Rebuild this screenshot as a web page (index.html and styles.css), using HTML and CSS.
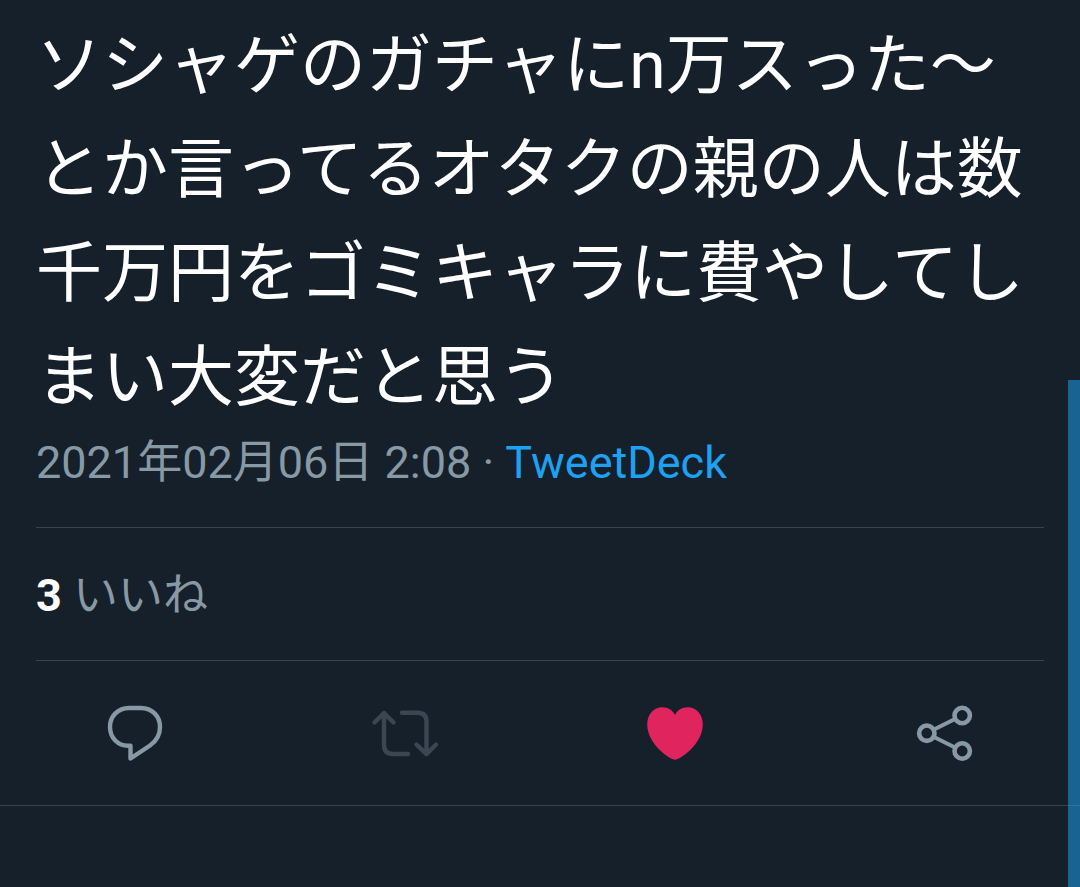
FILE: index.html
```html
<!DOCTYPE html>
<html lang="ja">
<head>
<meta charset="utf-8">
<meta name="viewport" content="width=device-width, initial-scale=1">
<title>ツイート</title>
<link rel="stylesheet" href="styles.css">
</head>
<body>
<main class="tweet">
  <article class="content">
    <p class="text">ソシャゲのガチャにn万スった〜とか言ってるオタクの親の人は数千万円をゴミキャラに費やしてしまい大変だと思う</p>
    <p class="meta"><time datetime="2021-02-06T02:08">2021年02月06日 2:08</time> · <a class="source" href="#">TweetDeck</a></p>
    <p class="stats"><strong class="count">3</strong> いいね</p>
  </article>
  <div class="actions">
    <button class="action" type="button" aria-label="返信">
      <svg class="icon" viewBox="0 0 90 90"><path stroke-width="4.400" d="M40.500 55.700H38C28 55.700 20 48 20 37C20 26 28 18 39 18H51C62 18 70 26 70 37C70 44.500 66.500 51 60 55.500L40.500 68.500Z"/></svg>
    </button>
    <button class="action faded" type="button" aria-label="リツイート" disabled>
      <svg class="icon" viewBox="0 0 90 90"><path stroke-width="4.400" d="M14.500 32.500L24 23L33.500 32.500M24 23V55Q24 64 33 64H48M42 22.800H57.500Q66.500 22.800 66.500 31.800V64M56.500 54.500L66.500 64.200L76 54.500"/></svg>
    </button>
    <button class="action liked" type="button" aria-label="いいね" aria-pressed="true">
      <svg class="icon" viewBox="0 0 90 90"><path d="M45 69.800C40 69.800 17.200 54 17.200 34.500C17.200 24 24 17.300 32 17.300C38 17.300 42.500 20 45 25C47.500 20 52 17.300 58 17.300C66 17.300 72.800 24 72.800 34.500C72.800 54 50 69.800 45 69.800Z"/></svg>
    </button>
    <button class="action" type="button" aria-label="共有">
      <svg class="icon" viewBox="0 0 90 90"><path stroke-width="4" d="M34 39.500L55 29M34 47L55 57.500"/><g stroke-width="4.600"><circle cx="26.800" cy="43.200" r="7.700"/><circle cx="62.200" cy="25.500" r="7.700"/><circle cx="62.200" cy="61" r="7.700"/></g></svg>
    </button>
  </div>
</main>
<div class="scrollbar"></div>
</body>
</html>
```
FILE: styles.css
```css
* { box-sizing: border-box; }
body {
  margin: 0;
  min-height: 100vh;
  background: #16202a;
  color: #fff;
  font-family: Roboto, "Noto Sans CJK JP", sans-serif;
}
p { margin: 0; }
.tweet { border-bottom: 1px solid #38444d; }
.content { padding: 14px 36px 0; }
.text { font-size: 66px; line-height: 104px; }
.meta {
  padding-bottom: 31px;
  border-bottom: 1px solid #38444d;
  color: #8899a6;
  font-size: 45px;
  line-height: 66px;
}
.source { color: #1da1f2; text-decoration: none; }
.stats {
  padding: 34px 0 30px;
  border-bottom: 1px solid #38444d;
  color: #8899a6;
  font-size: 45px;
  line-height: 68px;
}
.count { color: #fff; }
.actions { display: flex; padding: 29px 0 25px; }
.action {
  display: flex;
  flex: 1;
  justify-content: center;
  padding: 0;
  border: 0;
  background: none;
  color: #8899a6;
}
.icon {
  width: 90px;
  height: 90px;
  fill: none;
  stroke: currentColor;
  stroke-linecap: round;
  stroke-linejoin: round;
}
.faded { color: #3a4652; }
.liked { color: #e0245e; }
.liked .icon { fill: currentColor; stroke: none; }
.scrollbar {
  position: absolute;
  top: 380px;
  right: 0;
  bottom: 0;
  width: 12px;
  background: rgba(29, 161, 242, 0.52);
}
```
